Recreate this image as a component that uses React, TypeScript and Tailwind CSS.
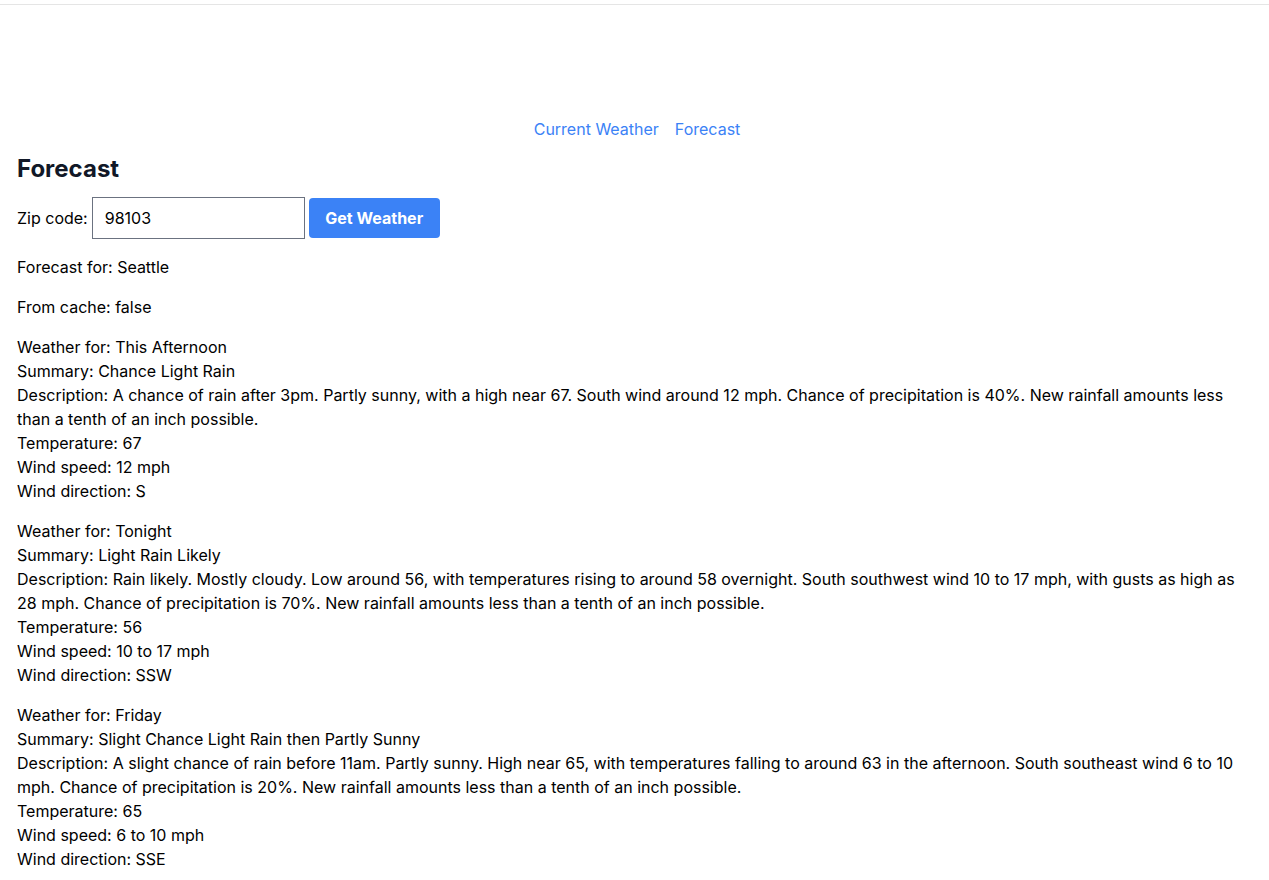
import React from 'react';

type Period = {
    name: string;
    summary: string;
    description: string;
    temperature: number;
    windSpeed: string;
    windDirection: string;
};

const periods: Period[] = [
    {
        name: "This Afternoon",
        summary: "Chance Light Rain",
        description: "A chance of rain after 3pm. Partly sunny, with a high near 67. South wind around 12 mph. Chance of precipitation is 40%. New rainfall amounts less than a tenth of an inch possible.",
        temperature: 67,
        windSpeed: "12 mph",
        windDirection: "S",
    },
    {
        name: "Tonight",
        summary: "Light Rain Likely",
        description: "Rain likely. Mostly cloudy. Low around 56, with temperatures rising to around 58 overnight. South southwest wind 10 to 17 mph, with gusts as high as 28 mph. Chance of precipitation is 70%. New rainfall amounts less than a tenth of an inch possible.",
        temperature: 56,
        windSpeed: "10 to 17 mph",
        windDirection: "SSW",
    },
    {
        name: "Friday",
        summary: "Slight Chance Light Rain then Partly Sunny",
        description: "A slight chance of rain before 11am. Partly sunny. High near 65, with temperatures falling to around 63 in the afternoon. South southeast wind 6 to 10 mph. Chance of precipitation is 20%. New rainfall amounts less than a tenth of an inch possible.",
        temperature: 65,
        windSpeed: "6 to 10 mph",
        windDirection: "SSE",
    },
];

export default function App() {
    return (
        <div className="min-h-screen bg-white text-black font-['Inter',sans-serif] text-base leading-6">
            {/* top rule */}
            <div className="pt-[4px]">
                <div className="border-t border-[#e5e5e5]" />
            </div>

            <nav className="mt-[112px] pl-[5px] flex justify-center gap-4 text-[#3b82f6]">
                <a href="#">Current Weather</a>
                <a href="#">Forecast</a>
            </nav>

            <main className="pl-[17px] pr-4">
                <h1 className="mt-[12px] text-2xl leading-8 font-bold text-[#111827]">Forecast</h1>

                <form className="mt-[12px] flex items-center" onSubmit={(e) => e.preventDefault()}>
                    <label htmlFor="zip">Zip code:</label>
                    <input
                        id="zip"
                        defaultValue="98103"
                        className="ml-[4px] w-[213px] h-[42px] border border-[#6b7280] px-3 outline-none"
                    />
                    <button className="ml-[4px] h-[40px] w-[131px] rounded bg-[#3b82f6] text-white font-bold">
                        Get Weather
                    </button>
                </form>

                <div className="mt-4">
                    <p>Forecast for: Seattle</p>
                    <p className="mt-4">From cache: false</p>
                    {periods.map((p) => (
                        <div key={p.name} className="mt-4">
                            <div>Weather for: {p.name}</div>
                            <div>Summary: {p.summary}</div>
                            <div>Description: {p.description}</div>
                            <div>Temperature: {p.temperature}</div>
                            <div>Wind speed: {p.windSpeed}</div>
                            <div>Wind direction: {p.windDirection}</div>
                        </div>
                    ))}
                </div>
            </main>
        </div>
    );
}
